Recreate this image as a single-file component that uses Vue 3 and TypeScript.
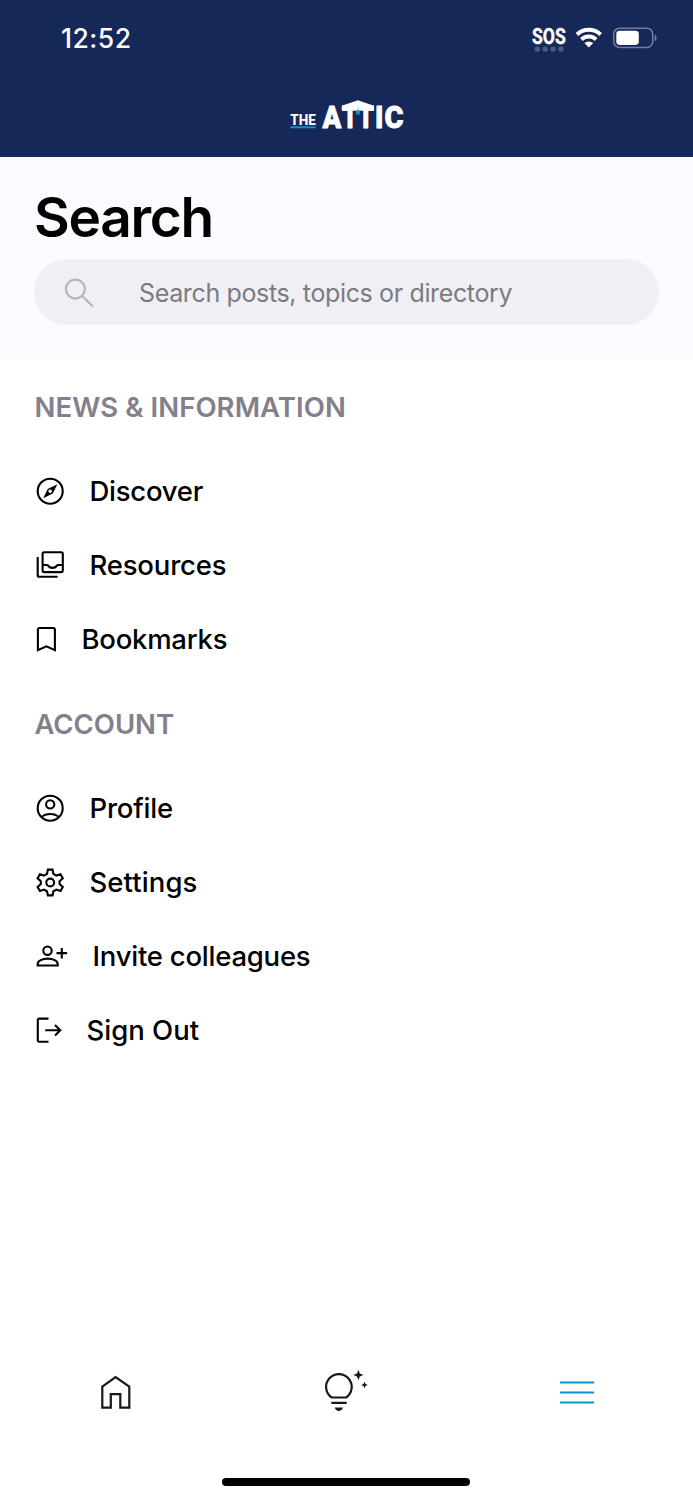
<script setup lang="ts">
type IconName = 'compass' | 'inbox' | 'bookmark' | 'profile' | 'gear' | 'invite' | 'exit'
interface Item { label: string; icon: IconName; width: number; cls: string }
interface Section { title: string; cls: string; items: Item[] }

const sections: Section[] = [
  {
    title: 'NEWS & INFORMATION', cls: 'news', items: [
      { label: 'Discover', icon: 'compass', width: 28, cls: 'discover' },
      { label: 'Resources', icon: 'inbox', width: 28, cls: 'resources' },
      { label: 'Bookmarks', icon: 'bookmark', width: 20, cls: 'bookmarks' },
    ],
  },
  {
    title: 'ACCOUNT', cls: 'account', items: [
      { label: 'Profile', icon: 'profile', width: 28, cls: 'profile' },
      { label: 'Settings', icon: 'gear', width: 28, cls: 'settings' },
      { label: 'Invite colleagues', icon: 'invite', width: 31, cls: 'invite' },
      { label: 'Sign Out', icon: 'exit', width: 25, cls: 'signout' },
    ],
  },
]
</script>

<template>
  <div class="screen">
    <header class="top">
      <div class="status">
        <span class="time">12:52</span>
        <svg class="signals" width="128" height="28" viewBox="530 24 128 28">
          <text class="sos" x="532" y="43.6" textLength="33.800" lengthAdjust="spacingAndGlyphs">SOS</text>
          <g fill="#4b5a84">
            <rect x="534.7" y="46.5" width="5.3" height="5.3" rx="2" />
            <rect x="542.6" y="46.5" width="5.3" height="5.3" rx="2" />
            <rect x="550.4" y="46.5" width="5.3" height="5.3" rx="2" />
            <rect x="558.3" y="46.5" width="5.3" height="5.3" rx="2" />
          </g>
          <g fill="none" stroke="#fff" stroke-width="4">
            <path d="M577 34.5a17 17 0 0 1 23.600 0" />
            <path d="M581.500 39.500a10.600 10.600 0 0 1 14.600 0" />
          </g>
          <path d="M584.400 43.100a6.500 6.500 0 0 1 8.800 0l-4.400 4.500z" fill="#fff" />
          <rect x="613.700" y="28.200" width="39" height="19.200" rx="5.800" fill="none" stroke="#737e9e" stroke-width="1.500" />
          <rect x="616.300" y="30.700" width="22.500" height="14.200" rx="3.300" fill="#fff" />
          <path d="M654.700 34.400c2.500 1.200 2.500 5.600 0 6.800z" fill="#737e9e" />
        </svg>
      </div>
      <svg class="logo" width="120" height="54" viewBox="289 88 120 54">
        <text class="the" x="290.300" y="124.600" textLength="25.500" lengthAdjust="spacingAndGlyphs">THE</text>
        <rect x="290.300" y="126.300" width="25.500" height="2" fill="#0893cf" />
        <text class="attic" x="322.600" y="128.400" textLength="18.800" lengthAdjust="spacingAndGlyphs">A</text>
        <text class="attic" x="342.200" y="128.400" textLength="31.400" lengthAdjust="spacingAndGlyphs">TT</text>
        <text class="attic" x="374.900" y="128.400" textLength="8.400" lengthAdjust="spacingAndGlyphs">I</text>
        <text class="attic" x="384.600" y="128.400" textLength="19" lengthAdjust="spacingAndGlyphs">C</text>
        <path d="M341.800 105.800 357.800 100.200 374.100 105.800v5h-5L357.800 107l-10.500 3.800h-5.500z" fill="#fff" />
        <rect x="355.900" y="110.500" width="4" height="4" fill="#0893cf" />
      </svg>
    </header>

    <section class="search">
      <h1>Search</h1>
      <div class="field">
        <svg width="32" height="32" viewBox="62 275.500 32 32" fill="none" stroke="#b5b5bb" stroke-width="2.200" stroke-linecap="round">
          <circle cx="75.400" cy="288.600" r="9.500" />
          <path d="m82.300 295.500 10 10" />
        </svg>
        <span>Search posts, topics or directory</span>
      </div>
    </section>

    <main>
      <section v-for="s in sections" :key="s.title">
        <h2 :class="s.cls"><span>{{ s.title }}</span></h2>
        <div v-for="i in s.items" :key="i.label" class="row">
          <svg class="icon" :width="i.width" height="30" :viewBox="`0 0 ${i.width} 30`">
            <template v-if="i.icon === 'compass'">
              <circle cx="14.200" cy="15.200" r="12.500" />
              <path class="solid" fill-rule="evenodd" d="M21.300 8.200 16.800 17.600 7.200 22.200 11.700 12.900zM14.200 13.400a1.800 1.800 0 1 0 .01 0z" />
            </template>
            <template v-else-if="i.icon === 'inbox'">
              <rect x="6.600" y="2.300" width="20.200" height="19.800" rx="1.500" />
              <path d="M6.600 15h4.600c1 0 1.200 2.900 5.300 2.900s4.300-2.900 5.300-2.900h5M1.700 7v18.200a1.500 1.500 0 0 0 1.500 1.500h18.500" />
            </template>
            <path v-else-if="i.icon === 'bookmark'" d="M1.900 26.100V5.500q0-1.500 1.500-1.500h14q1.500 0 1.500 1.500v20.600l-8.500-3.700z" />
            <template v-else-if="i.icon === 'profile'">
              <circle cx="14.200" cy="15.200" r="12.500" />
              <circle cx="14.200" cy="11.400" r="4.100" />
              <path d="M5.500 24.200c4.500-4.200 12.900-4.200 17.400 0" />
            </template>
            <template v-else-if="i.icon === 'gear'">
              <path d="M11.900 2.600h4.600l.9 4.300 3 1.700 4.100-1.300 2.300 4-3.200 2.900v2.800l3.200 2.900-2.300 4-4.100-1.300-3 1.700-.9 4.100h-4.600l-.9-4.100-3-1.700-4.100 1.300-2.300-4 3.200-2.900v-2.800l-3.200-2.900 2.300-4L8 8.600l3-1.700z" />
              <circle cx="14.200" cy="15.500" r="3.900" />
            </template>
            <template v-else-if="i.icon === 'invite'">
              <circle cx="11.500" cy="9.700" r="4.200" />
              <path d="M1.700 24.500v-1.600c0-3.100 4.800-5.300 10-5.300s10 2.200 10 5.300v1.600zM20.500 12.100h10.600M25.800 6.900v10.500" />
            </template>
            <path v-else d="M12.500 3.600h-9.300q-1.400 0-1.400 1.400v20.400q0 1.400 1.400 1.400h9.300M9.200 15.200h14.900M19 9.900l5.300 5.300-5.300 5.300" />
          </svg>
          <span class="label" :class="i.cls">{{ i.label }}</span>
        </div>
      </section>
    </main>

    <nav>
      <svg width="36" height="40" viewBox="98 1373 36 40" fill="none" stroke="#17171c" stroke-width="2.200">
        <path d="M102.300 1386.600 115.600 1377.200 129.300 1386.600v21.100h-9v-13.600h-9.500v13.600h-8.500z" />
      </svg>
      <svg width="46" height="46" viewBox="324 1369.500 46 46" fill="none" stroke="#17171c" stroke-width="2.200">
        <path d="M331.800 1397a12.800 12.800 0 1 1 14.200 0zM331.300 1402.300h15.400" />
        <path d="M334.700 1407h8.300c-.7 2-2.300 3.600-4.150 3.600s-3.450-1.600-4.150-3.600zM358.400 1369.300l1.400 3.800 3.600 1.400-3.600 1.400-1.400 3.800-1.400-3.800-3.600-1.400 3.600-1.400zM364.500 1381.200l1 2.300 2.300 1-2.300 1-1 2.300-1-2.300-2.300-1 2.300-1z" fill="#17171c" stroke="none" />
      </svg>
      <svg width="36" height="26" viewBox="559 1380 36 26" stroke="#0893cf" stroke-width="2.200">
        <path d="M560 1382.500h34M560 1392.500h34M560 1402.500h34" />
      </svg>
    </nav>
    <div class="home-bar"></div>
  </div>
</template>

<style>
body { background: #fff; }
</style>

<style scoped>
.screen {
  box-sizing: border-box;
  width: 693px;
  height: 1500px;
  display: flex;
  flex-direction: column;
  background: #fff;
  color: #000;
  font-family: Inter, "Liberation Sans", sans-serif;
  white-space: nowrap;
  overflow: hidden;
}
.top {
  box-sizing: border-box;
  height: 157.300px;
  background: #162857;
  padding-top: 24px;
  flex: none;
}
.status { display: flex; height: 28px; justify-content: space-between; padding: 0 35px 0 61px; }
.time { color: #fff; font-size: 26.500px; line-height: 29px; font-weight: 550; letter-spacing: 0.500px; }
.signals { flex: none; }
.sos { font: 700 22px Roboto, sans-serif; fill: #fff; stroke: #fff; stroke-width: 0.400px; }
.logo { display: block; margin: 36px 0 0 289px; }
.the { font: 800 14.500px Roboto, sans-serif; fill: #fff; }
.attic { font: 900 32px Roboto, sans-serif; fill: #fff; stroke: #fff; stroke-width: 0.800px; }
.search {
  box-sizing: border-box;
  height: 202.300px;
  flex: none;
  background: #fbfaff;
  padding: 26.700px 34px 0;
}
h1 { margin: 0; font-size: 55px; line-height: 66px; height: 75px; font-weight: 600; letter-spacing: -1.300px; }
.field {
  box-sizing: border-box;
  height: 66.500px;
  border-radius: 34px;
  background: #f0eff5;
  padding-left: 28px;
  display: flex;
  align-items: center;
  gap: 45px;
  color: #7b7b80;
  font-size: 25px;
  letter-spacing: -0.360px;
}
.field span { padding-top: 1px; }
h2 {
  margin: 0;
  height: 94.300px;
  padding: 1px 0 0 34.500px;
  box-sizing: border-box;
  display: flex;
  align-items: center;
  font-size: 27.500px;
  font-weight: 580;
  color: #82808c;
  letter-spacing: 0.080px;
}
h2.account { letter-spacing: -0.050px; }
.row { height: 74.150px; padding-left: 35.500px; display: flex; align-items: center; gap: 26px; }
.icon { flex: none; fill: none; stroke: #000; stroke-width: 2.100; overflow: visible; }
.icon .solid { fill: #000; stroke: none; }
.label { font-size: 27.500px; font-weight: 500; }
.discover { letter-spacing: -0.250px; }
.resources { letter-spacing: -0.180px; }
.bookmarks { letter-spacing: -0.250px; }
.profile { letter-spacing: -0.200px; }
.settings { letter-spacing: 0.100px; }
.label.invite { letter-spacing: -0.230px; }
nav {
  margin-top: auto;
  height: 110px;
  flex: none;
  display: flex;
  align-items: center;
  justify-content: space-between;
  padding: 0 98px;
}
.home-bar { width: 248px; height: 8.500px; border-radius: 5px; background: #000; margin: 30px 0 14px 222.400px; flex: none; }
</style>
